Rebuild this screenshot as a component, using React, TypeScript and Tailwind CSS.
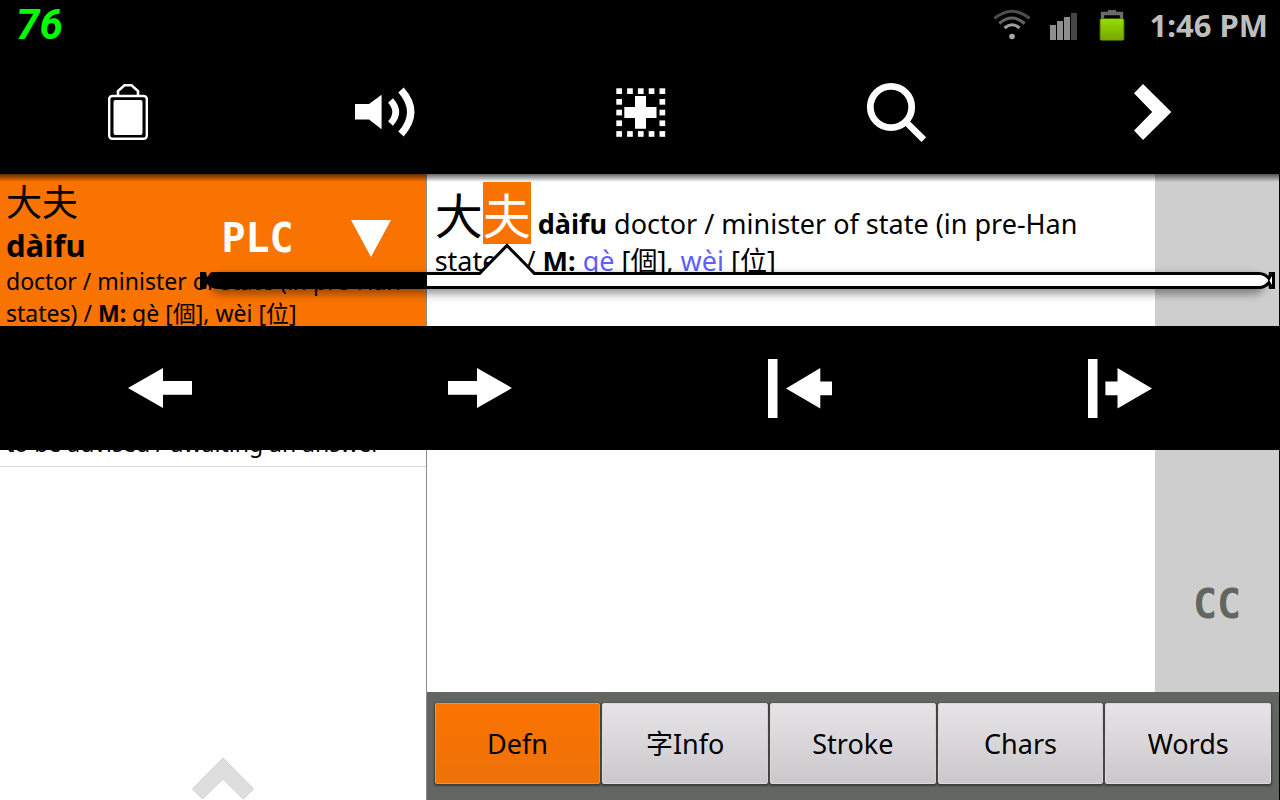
import type { ReactNode } from "react";

const dots = [0, 1, 2, 3, 4].flatMap((row) =>
  [0, 1, 2, 3, 4]
    .filter((col) => row === 0 || row === 4 || col === 0 || col === 4)
    .map((col) => ({ row, col })),
);

function ClipboardIcon() {
  return (
    <svg width="64" height="64" viewBox="0 0 64 64" fill="none" stroke="white" aria-hidden="true">
      <path d="M22 15V11L28.5 5.2H35.5L42 11V15" strokeWidth="2.6" />
      <rect x="13.2" y="16" width="37.6" height="42.8" rx="3" strokeWidth="2.4" />
      <rect x="17.5" y="20" width="29" height="35" rx="2" fill="white" stroke="none" />
    </svg>
  );
}

function SpeakerIcon() {
  return (
    <svg width="64" height="64" viewBox="0 0 64 64" fill="none" stroke="white" aria-hidden="true">
      <path d="M3 24H17L29.6 14.8V49.2L17 39.6H3Z" fill="white" stroke="none" />
      <path d="M38.5 20.5Q49 32 38.5 43.5" strokeWidth="6.6" />
      <path d="M49 10Q68.5 32 49 54" strokeWidth="7.2" />
    </svg>
  );
}

function AddSelectionIcon() {
  return (
    <svg width="64" height="64" viewBox="0 0 64 64" fill="white" aria-hidden="true">
      {dots.map(({ row, col }) => (
        <rect key={`${row}-${col}`} x={8.3 + col * 10.8} y={8.3 + row * 10.7} width="5.7" height="5.7" />
      ))}
      <path d="M27 16H38V27H48.5V38H38V48.7H27V38H16.3V27H27Z" />
    </svg>
  );
}

function SearchIcon() {
  return (
    <svg width="64" height="64" viewBox="0 0 64 64" fill="none" stroke="white" aria-hidden="true">
      <circle cx="27" cy="27" r="20.7" strokeWidth="6.8" />
      <path d="M41 41L59.8 59.6" strokeWidth="6.6" />
    </svg>
  );
}

function NextIcon() {
  return (
    <svg width="64" height="64" viewBox="0 0 64 64" fill="white" aria-hidden="true">
      <path d="M14 13.3L23 4L51.3 32L23 60L14 50.5L32.2 32Z" />
    </svg>
  );
}

function ArrowIcon({ d }: { d: string }) {
  return (
    <svg width="64" height="64" viewBox="0 0 64 64" fill="white" aria-hidden="true">
      <path d={d} />
    </svg>
  );
}

const tools: { label: string; icon: ReactNode }[] = [
  { label: "Clipboard", icon: <ClipboardIcon /> },
  { label: "Play audio", icon: <SpeakerIcon /> },
  { label: "Add", icon: <AddSelectionIcon /> },
  { label: "Search", icon: <SearchIcon /> },
  { label: "Next", icon: <NextIcon /> },
];

const moves = [
  { label: "Move left", d: "M0 32L35 12V25H64V38.7H35V52Z" },
  { label: "Move right", d: "M64 32L29 12V25H0V38.7H29V52Z" },
  { label: "Extend left", d: "M0 3H9.5V62H0ZM18 32.5L52.3 12V25.6H64V39.3H52.3V52.5Z" },
  { label: "Extend right", d: "M0 3H9.5V62H0ZM64 32.5L29.5 12V25.6H17.4V39.3H29.5V52.5Z" },
];

const tabs = ["Defn", "字Info", "Stroke", "Chars", "Words"];

function StatusBar() {
  return (
    <header className="flex h-[50px] items-center justify-between pr-[12px] pl-[16px]">
      <span className="font-['Liberation_Sans_Narrow','Roboto',sans-serif] text-[42px] leading-[46px] font-bold text-[#00ff00] italic">
        76
      </span>
      <div className="flex items-center">
        <svg className="mr-[17px]" width="40" height="40" viewBox="0 0 40 40" fill="none" aria-hidden="true">
          <path d="M2.5 13.5Q20 -1 37.5 13.5" stroke="#4c4e4c" strokeWidth="3" />
          <path d="M7.3 18.5Q20 7.5 32.7 18.5" stroke="#626462" strokeWidth="3" />
          <path d="M12.5 23Q20 16.5 27.5 23" stroke="#a0a0a0" strokeWidth="3" />
          <circle cx="20" cy="31.5" r="2.8" fill="#a8a8a8" />
        </svg>
        <svg className="mr-[19px]" width="28" height="40" viewBox="0 0 28 40" aria-hidden="true">
          <path d="M1 20H7V35H1ZM8 16H14V35H8ZM15 12H21V35H15Z" fill="#8d8f8d" />
          <path d="M22 8H28V35H22Z" fill="#454745" />
        </svg>
        <svg className="mr-[22px]" width="32" height="40" viewBox="0 0 32 40" aria-hidden="true">
          <defs>
            <linearGradient id="charge" x1="0" y1="0" x2="0" y2="1">
              <stop offset="0" stopColor="#94dc00" />
              <stop offset="1" stopColor="#76a800" />
            </linearGradient>
          </defs>
          <path d="M6.5 16V8.5H25.5V16" fill="none" stroke="#6a6a6c" strokeWidth="3.4" />
          <path d="M12 5H20V8H12Z" fill="#6a6a6c" />
          <rect x="3.6" y="13.2" width="24.8" height="22.6" rx="2" fill="#4e7600" />
          <rect x="4.6" y="14" width="22.8" height="21" rx="1" fill="url(#charge)" />
        </svg>
        <span className="text-[31px] leading-[50px] font-bold text-[#bebebe]">1:46 PM</span>
      </div>
    </header>
  );
}

function ResultList() {
  return (
    <section className="relative w-1/3 shrink-0 overflow-hidden border-r border-[#8c8c8c] text-[23px] leading-[32px]">
      <ul>
        <li className="relative border-b border-[#dcdcdc] bg-[#f97300] px-[6px] py-[7px]">
          <div className="mb-[6px] font-['Noto_Sans_CJK_SC',sans-serif] text-[36px] leading-[38px]">大夫</div>
          <div className="text-[31px] leading-[40px] font-bold">dàifu</div>
          <p className="whitespace-nowrap">
            doctor / minister of state (in pre-Han
            <br />
            states) / <b>M:</b> gè [個], wèi [位]
          </p>
          <div className="absolute top-[32px] right-[34px] flex items-center gap-[56px]">
            <span className="font-['DejaVu_Sans_Mono',monospace] text-[40px] leading-[64px] font-bold text-white">PLC</span>
            <button type="button" aria-label="Choose dictionary">
              <svg width="42" height="40" viewBox="0 0 42 40" fill="white" aria-hidden="true">
                <path d="M1 2H41L21 39Z" />
              </svg>
            </button>
          </div>
        </li>
        <li className="flex h-[130px] items-end border-b border-[#dcdcdc] px-[6px] pb-[7px] whitespace-nowrap">
          to be advised / awaiting an answer
        </li>
      </ul>
      <button type="button" aria-label="Expand" className="absolute inset-x-0 bottom-0 flex justify-center pl-[20px]">
        <svg width="64" height="44" viewBox="0 0 64 44" fill="#dedede" stroke="#cfcfcf" aria-hidden="true">
          <path d="M32 2L62.5 33L52.5 43L32 23L11.5 43L1.5 33Z" />
        </svg>
      </button>
    </section>
  );
}

function Definition() {
  return (
    <section className="flex min-w-0 flex-1 flex-col border-r border-black">
      <div className="flex flex-1">
        <article className="flex-1 px-[8px] pt-[8px] text-[27px] leading-[33px]">
          <p>
            <span className="inline-block font-['Noto_Sans_CJK_SC',sans-serif] text-[48px] leading-[62px]">
              大<mark className="inline-block bg-[#f97300] text-white">夫</mark>
            </span>{" "}
            <b>dàifu</b> doctor / minister of state (in pre-Han
            <br />
            states) / <b>M:</b> <a href="#ge" className="text-[#5f5fff]">gè</a> [個],{" "}
            <a href="#wei" className="text-[#5f5fff]">wèi</a> [位]
          </p>
        </article>
        <aside className="flex w-[124px] items-end justify-center bg-[#cecece] pb-[56px]">
          <span className="font-['DejaVu_Sans_Mono',monospace] text-[40px] leading-[64px] font-bold text-[#636561]">CC</span>
        </aside>
      </div>
      <nav className="flex h-[108px] gap-[2px] bg-[#636561] px-[8px] pt-[11px] pb-[16px]">
        {tabs.map((tab, i) => (
          <button
            key={tab}
            type="button"
            className={
              i === 0
                ? "flex-1 rounded-[2px] border border-[#ff9420] bg-linear-to-b from-[#fb7400] to-[#ee7209] pt-[2px] text-[27px] shadow-[0_1px_2px_1px_#3c3e3a]"
                : "flex-1 rounded-[2px] border border-[#dcdadc] bg-linear-to-b from-[#e7e4e7] to-[#cac8ca] pt-[2px] text-[27px] shadow-[0_1px_2px_1px_#3c3e3a]"
            }
          >
            {tab}
          </button>
        ))}
      </nav>
    </section>
  );
}

function SelectionPopup() {
  return (
    <div className="absolute inset-x-0 top-[98px]">
      <div className="relative mr-[5px] ml-[200px] flex h-[17px]">
        <div className="absolute inset-x-[12px] inset-y-0 rounded-[10px] shadow-[0_4px_9px_1px_rgba(0,0,0,0.4)]" />
        <svg className="relative shrink-0" width="20" height="17" viewBox="0 0 20 17" aria-hidden="true">
          <path d="M0 0H6L7 5Q11 0 19 0H20V17H19Q11 17 7 12L6 17H0Z" />
        </svg>
        <div className="relative w-[207px] shrink-0 bg-black" />
        <div className="relative flex-1 border-y-[3px] border-black bg-white" />
        <svg className="relative shrink-0" width="20" height="17" viewBox="0 0 20 17" fill="white" aria-hidden="true">
          <path d="M0 1.5H4Q10 1.5 14.5 7V10Q10 15.5 4 15.5H0" stroke="black" strokeWidth="3" />
          <path d="M14 0H20V17H14L13 11L15 8.5L13 6Z" fill="black" />
          <path d="M17 4V13L14.5 8.5Z" />
        </svg>
        <svg className="absolute -top-[29px] left-[277px]" width="60" height="33" viewBox="0 0 60 33" aria-hidden="true">
          <path d="M3 32L30 3L57 32V33H3Z" fill="white" />
          <path d="M2 31L30 2.5L58 31" fill="none" stroke="black" strokeWidth="3" />
        </svg>
      </div>
      <div className="mt-[37px] flex h-[124px] items-center bg-black">
        {moves.map((move) => (
          <button key={move.label} type="button" aria-label={move.label} className="flex flex-1 justify-center">
            <ArrowIcon d={move.d} />
          </button>
        ))}
      </div>
    </div>
  );
}

export default function App() {
  return (
    <div className="flex min-h-screen flex-col bg-black font-['Noto_Sans','Noto_Sans_CJK_SC',sans-serif] text-black">
      <StatusBar />
      <div className="flex h-[124px] items-center">
        {tools.map((tool) => (
          <button key={tool.label} type="button" aria-label={tool.label} className="flex flex-1 justify-center">
            {tool.icon}
          </button>
        ))}
      </div>
      <main className="relative flex flex-1 bg-white">
        <ResultList />
        <Definition />
        <div className="absolute inset-x-0 top-0 h-[8px] bg-linear-to-b from-black/60 to-transparent" />
        <SelectionPopup />
      </main>
    </div>
  );
}
